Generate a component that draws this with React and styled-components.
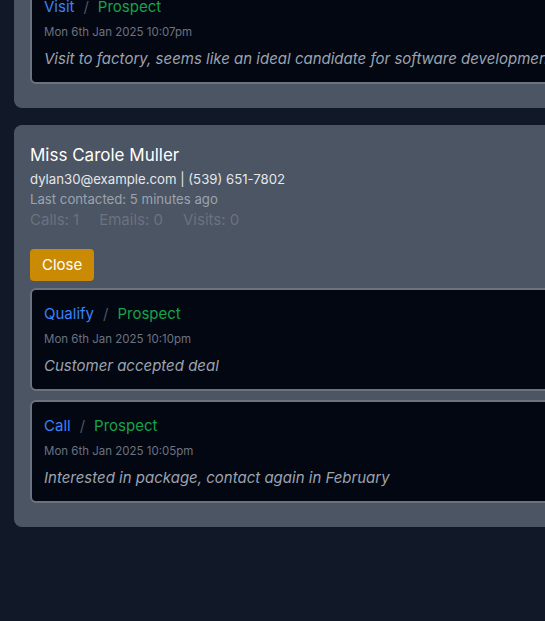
import React from "react";
import styled, { createGlobalStyle } from "styled-components";

const GlobalStyle = createGlobalStyle`
  html, body {
    margin: 0;
    padding: 0;
    background: #111827;
    overflow: hidden;
  }
  body {
    font-family: Inter, "Noto Sans", "Liberation Sans", sans-serif;
    color: #f9fafb;
  }
`

const Page = styled.div`
  min-height: 621px;
  padding: 0 0 0 14px;
  display: flex;
  flex-direction: column;
  gap: 17px;
`

const ContactCard = styled.div`
  width: 660px;
  flex-shrink: 0;
  background: #4b5563;
  border-radius: 8px;
  padding: 16px 16px 24px;
  box-sizing: border-box;
  margin-top: ${(p) => (p.$cutoff ? "-35px" : "0")};
`

const Name = styled.h2`
  margin: 0;
  font-size: 17px;
  line-height: 28px;
  font-weight: 400;
  color: #ffffff;
`

const Details = styled.div`
  font-size: 13.2px;
  line-height: 20px;
  color: ${(p) => p.$color};
`

const Stats = styled.div`
  display: flex;
  gap: 20px;
  font-size: 15px;
  line-height: 20px;
  color: #6b7280;
  margin-top: 1px;
`

const CloseButton = styled.button`
  margin-top: 19px;
  align-self: flex-start;
  background: #ca8a04;
  color: #ffffff;
  border: none;
  border-radius: 4px;
  padding: 4px 12px;
  font-family: inherit;
  font-size: 15px;
  line-height: 24px;
  cursor: pointer;
`

const Notes = styled.div`
  display: flex;
  flex-direction: column;
  gap: 9px;
  margin-top: ${(p) => (p.$spaced ? "7px" : "0")};
`

const Note = styled.div`
  background: #030712;
  border: 2px solid #6b7280;
  border-radius: 6px;
  padding: 12px 12px 11px;
`

const NoteTitle = styled.div`
  font-size: 15px;
  line-height: 24px;
  display: flex;
  gap: 9px;
`

const Kind = styled.span`
  color: #3b82f6;
`

const Slash = styled.span`
  color: #4b5563;
`

const Stage = styled.span`
  color: #16a34a;
`

const NoteDate = styled.div`
  margin-top: 5px;
  font-size: 11.5px;
  line-height: 16px;
  color: #6b7280;
`

const NoteBody = styled.div`
  margin-top: 7px;
  font-size: 15px;
  line-height: 24px;
  font-style: italic;
  color: #9ca3af;
  white-space: nowrap;
`

const CardBody = styled.div`
  display: flex;
  flex-direction: column;
`

const NoteItem = ({ note }) => (
  <Note>
    <NoteTitle>
      <Kind>{note.kind}</Kind>
      <Slash>/</Slash>
      <Stage>{note.stage}</Stage>
    </NoteTitle>
    <NoteDate>{note.date}</NoteDate>
    <NoteBody>{note.body}</NoteBody>
  </Note>
);

const previousNotes = [
  {
    kind: "Visit",
    stage: "Prospect",
    date: "Mon 6th Jan 2025 10:07pm",
    body: "Visit to factory, seems like an ideal candidate for software development",
  },
];

const caroleNotes = [
  {
    kind: "Qualify",
    stage: "Prospect",
    date: "Mon 6th Jan 2025 10:10pm",
    body: "Customer accepted deal",
  },
  {
    kind: "Call",
    stage: "Prospect",
    date: "Mon 6th Jan 2025 10:05pm",
    body: "Interested in package, contact again in February",
  },
];

const App = () => {
  return (
    <>
      <GlobalStyle />
      <Page>
        <ContactCard $cutoff>
          <Notes>
            {previousNotes.map((n) => (
              <NoteItem key={n.date} note={n} />
            ))}
          </Notes>
        </ContactCard>
        <ContactCard>
          <CardBody>
            <Name>Miss Carole Muller</Name>
            <Details $color="#e5e7eb">dylan30@example.com | (539) 651-7802</Details>
            <Details $color="#9ca3af">Last contacted: 5 minutes ago</Details>
            <Stats>
              <span>Calls: 1</span>
              <span>Emails: 0</span>
              <span>Visits: 0</span>
            </Stats>
            <CloseButton>Close</CloseButton>
            <Notes $spaced>
              {caroleNotes.map((n) => (
                <NoteItem key={n.date} note={n} />
              ))}
            </Notes>
          </CardBody>
        </ContactCard>
      </Page>
    </>
  );
};

export default App;
